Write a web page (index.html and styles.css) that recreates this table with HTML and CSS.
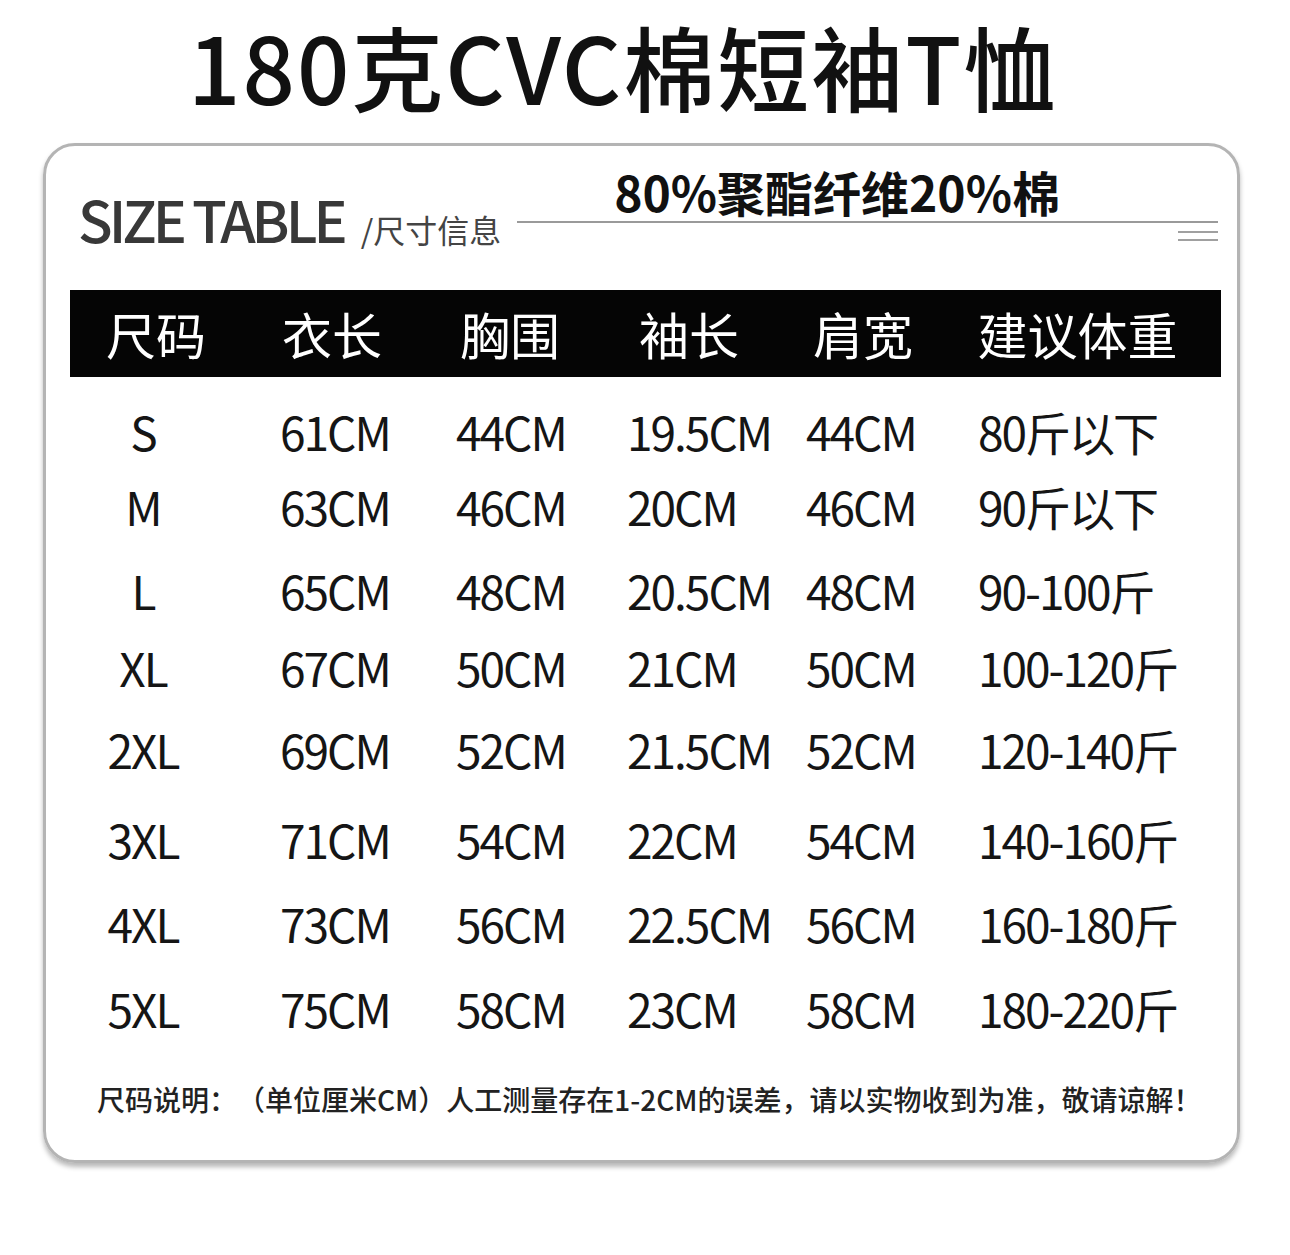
FILE: index.html
```html
<!DOCTYPE html>
<html lang="zh">
<head>
<meta charset="utf-8">
<title>180克CVC棉短袖T恤</title>
<link rel="stylesheet" href="styles.css">
</head>
<body>
<h1 class="title">180克CVC棉短袖T恤</h1>
<section class="card">
  <div class="head">
    <span class="size-title">SIZE TABLE</span>
    <span class="size-sub">/尺寸信息</span>
    <div class="rule">
      <div class="rule-top"><span class="fabric">80%聚酯纤维20%棉</span></div>
      <div class="rule-mark"></div>
    </div>
  </div>
  <div class="thead">
    <span>尺码</span><span>衣长</span><span>胸围</span><span>袖长</span><span>肩宽</span><span class="last">建议体重</span>
  </div>
  <div class="tbody">
    <span class="sz">S</span><span>61CM</span><span>44CM</span><span>19.5CM</span><span>44CM</span><span>80斤以下</span>
    <span class="sz">M</span><span>63CM</span><span>46CM</span><span>20CM</span><span>46CM</span><span>90斤以下</span>
    <span class="sz">L</span><span>65CM</span><span>48CM</span><span>20.5CM</span><span>48CM</span><span>90-100斤</span>
    <span class="sz">XL</span><span>67CM</span><span>50CM</span><span>21CM</span><span>50CM</span><span>100-120斤</span>
    <span class="sz">2XL</span><span>69CM</span><span>52CM</span><span>21.5CM</span><span>52CM</span><span>120-140斤</span>
    <span class="sz">3XL</span><span>71CM</span><span>54CM</span><span>22CM</span><span>54CM</span><span>140-160斤</span>
    <span class="sz">4XL</span><span>73CM</span><span>56CM</span><span>22.5CM</span><span>56CM</span><span>160-180斤</span>
    <span class="sz">5XL</span><span>75CM</span><span>58CM</span><span>23CM</span><span>58CM</span><span>180-220斤</span>
  </div>
  <p class="note">尺码说明：（单位厘米CM）人工测量存在1-2CM的误差，请以实物收到为准，敬请谅解！</p>
</section>
</body>
</html>
```
FILE: styles.css
```css
* { box-sizing: border-box; }
html, body { margin: 0; padding: 0; background: #fff; }
body {
  font-family: "Noto Sans CJK SC", "Noto Sans", sans-serif;
  color: #111;
  width: 1290px;
  height: 1255px;
  overflow: hidden;
  text-spacing-trim: space-all;
}
.title {
  margin: 0;
  padding-left: 188px;
  height: 130px;
  line-height: 130px;
  font-size: 92px;
  font-weight: 500;
  letter-spacing: 2px;
  color: #111;
}
.card {
  margin: 13px 0 0 43px;
  width: 1197px;
  height: 1020px;
  border: 3px solid #b4b4b4;
  border-radius: 32px;
  box-shadow: 0 4px 5px rgba(0,0,0,0.28);
  padding: 0;
}
.head {
  display: flex;
  align-items: flex-start;
  height: 144px;
  padding: 0 19px 0 32px;
}
.size-title {
  margin-top: 43px;
  font-size: 57px;
  line-height: 58px;
  color: #383838;
  font-weight: 500;
  letter-spacing: -4px;
  white-space: nowrap;
}
.size-sub {
  margin-top: 67px;
  margin-left: 17px;
  font-size: 32px;
  line-height: 32px;
  color: #444;
  white-space: nowrap;
}
.rule {
  flex: 1;
  margin-left: 16px;
  margin-top: 21px;
  display: flex;
  flex-direction: column;
}
.rule-top {
  border-bottom: 2px solid #9a9a9a;
  padding-left: 97px;
  padding-bottom: 6px;
}
.fabric {
  display: block;
  font-size: 48px;
  line-height: 48px;
  font-weight: 700;
  color: #111;
  white-space: nowrap;
}
.rule-mark {
  align-self: flex-end;
  width: 40px;
  height: 10px;
  margin-top: 8px;
  border-top: 2px solid #a0a0a0;
  border-bottom: 2px solid #a0a0a0;
}
.thead {
  margin: 0 16px 0 24px;
  height: 87px;
  background: #050505;
  display: grid;
  grid-template-columns: 172px 180px 176px 182px 166px 1fr;
  align-items: center;
  color: #fff;
  font-size: 50px;
  line-height: 87px;
  text-align: center;
}
.thead .last { padding-right: 12px; }
.tbody {
  margin: 17px 16px 0 24px;
  display: grid;
  grid-template-columns: 210px 176px 171px 179px 172px 1fr;
  grid-template-rows: 74px 76px 92px 62px 102px 78px 90px 80px;
  align-items: center;
  font-size: 46px;
  letter-spacing: -2px;
  color: #151515;
  white-space: nowrap;
}
.tbody .sz {
  text-align: center;
  padding-right: 64px;
}
.note {
  margin: 31px 0 0 51px;
  font-size: 28px;
  line-height: 40px;
  font-weight: 500;
  color: #222;
  white-space: nowrap;
}
```
